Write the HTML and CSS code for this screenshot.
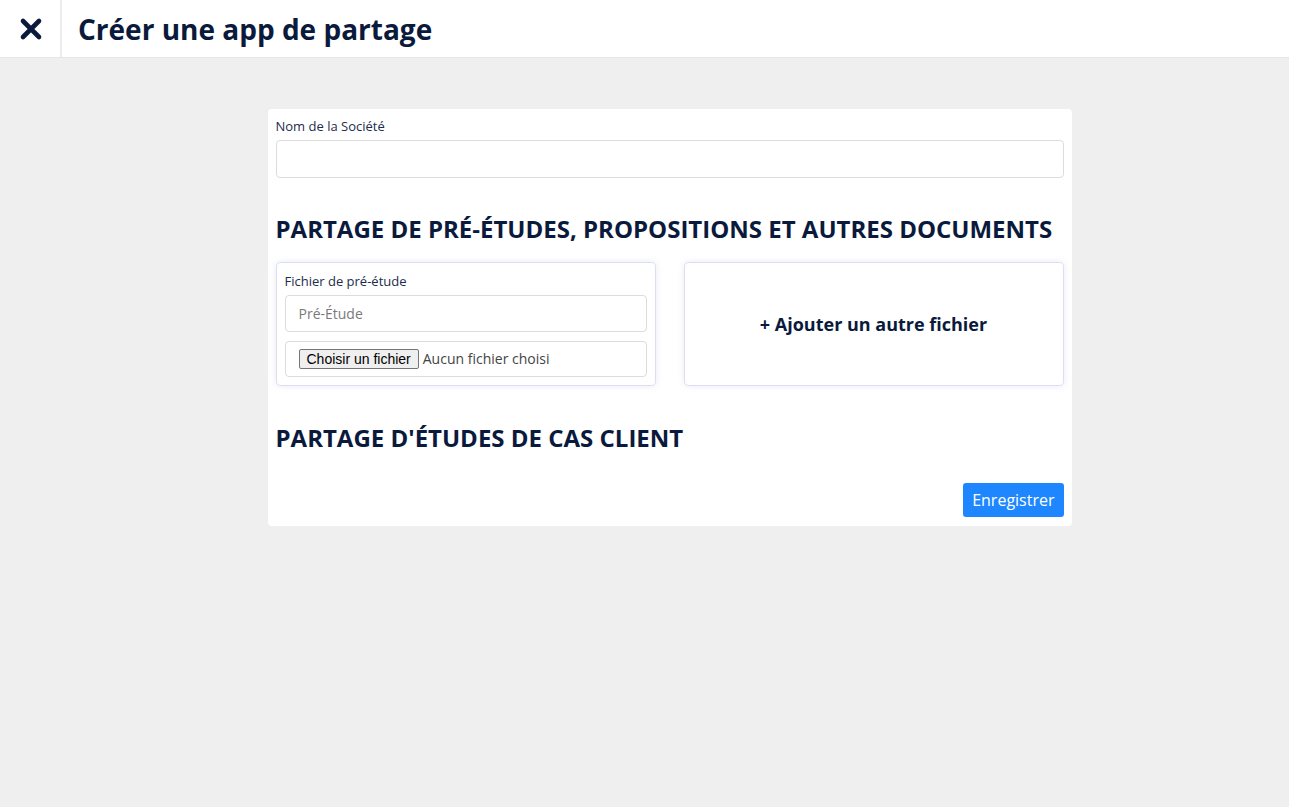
FILE: index.html
```html
<!DOCTYPE html>
<html lang="fr">
<head>
<meta charset="utf-8">
<title>Créer une app de partage</title>
<link rel="stylesheet" href="styles.css">
</head>
<body>
<header class="topbar">
  <button class="close-btn" aria-label="Fermer">
    <svg width="24" height="24" viewBox="0 0 24 24"><path d="M4 4 L20 20 M20 4 L4 20" stroke="#0a1a3c" stroke-width="4.6" stroke-linecap="round" fill="none"/></svg>
  </button>
  <h1 class="title">Créer une app de partage</h1>
</header>
<main class="page">
  <section class="card">
    <label class="label">Nom de la Société</label>
    <input class="input" type="text">
    <h2 class="section-title first">PARTAGE DE PRÉ-ÉTUDES, PROPOSITIONS ET AUTRES DOCUMENTS</h2>
    <div class="files">
      <div class="file-card">
        <label class="label">Fichier de pré-étude</label>
        <input class="input small" type="text" placeholder="Pré-Étude">
        <label class="input file-box">
          <input type="file" class="file-hidden">
          <span class="file-btn">Choisir un fichier</span>
          <span class="file-status">Aucun fichier choisi</span>
        </label>
      </div>
      <div class="file-card add">+ Ajouter un autre fichier</div>
    </div>
    <h2 class="section-title second">PARTAGE D'ÉTUDES DE CAS CLIENT</h2>
    <div class="actions"><button class="save">Enregistrer</button></div>
  </section>
</main>
</body>
</html>
```
FILE: styles.css
```css
* { box-sizing: border-box; }
html, body { margin: 0; height: 100%; }
body {
  background: #efefef;
  font-family: "Open Sans", sans-serif;
  color: #0a1a3c;
}
.topbar {
  height: 58px;
  background: #fff;
  border-bottom: 1px solid #e6e6e6;
  display: flex;
  align-items: stretch;
}
.close-btn {
  width: 62px;
  border: 0;
  border-right: 2px solid #ececec;
  background: #fff;
  display: flex;
  align-items: center;
  justify-content: center;
  padding: 0 0 0 1px;
}
.title {
  margin: 0 0 0 16px;
  font-size: 28px;
  font-weight: 700;
  align-self: center;
  line-height: 1;
}
.page {
  display: flex;
  justify-content: center;
  padding: 51px 0 0 50px;
}
.card {
  width: 804px;
  background: #fff;
  border-radius: 4px;
  padding: 8px 8px 9px;
  display: flex;
  flex-direction: column;
}
.label {
  font-size: 13px;
  color: #1d2c4c;
  line-height: 18px;
  margin-bottom: 5px;
}
.input {
  height: 38px;
  width: 100%;
  border: 1px solid #dcdcdc;
  border-radius: 4px;
  font-family: "Open Sans", sans-serif;
  font-size: 14px;
  padding: 0 13px;
  background: #fff;
}
.input::placeholder { color: #7a7a7a; }
.section-title {
  margin: 0;
  font-size: 24px;
  font-weight: 700;
  line-height: 32px;
}
.section-title.first { margin-top: 35px; margin-bottom: 17px; }
.section-title.second { margin-top: 36px; margin-bottom: 29px; }
.files {
  display: grid;
  grid-template-columns: 1fr 1fr;
  gap: 28px;
}
.file-card {
  min-width: 0;
  height: 124px;
  border: 1px solid #dcdff0;
  border-radius: 4px;
  box-shadow: 0 0 6px rgba(170, 175, 220, 0.25);
  padding: 9px 8px 8px;
  display: flex;
  flex-direction: column;
}
.input.small { height: 37px; }
.file-box {
  margin-top: 9px;
  height: 37px;
  display: flex;
  align-items: center;
  cursor: pointer;
}
.file-hidden { display: none; }
.file-btn {
  font-family: "Liberation Sans", Arial, sans-serif;
  font-size: 14px;
  line-height: 16px;
  color: #000;
  background: #efefef;
  border: 1px solid #767676;
  border-radius: 2px;
  padding: 1px 7px;
  margin-right: 4px;
}
.file-status {
  font-size: 14px;
  color: #444;
}
.add {
  align-items: center;
  justify-content: center;
  font-size: 18px;
  font-weight: 700;
  padding: 0;
}
.actions {
  display: flex;
  justify-content: flex-end;
}
.save {
  height: 34px;
  background: #1e87ff;
  color: #fff;
  border: 0;
  border-radius: 3px;
  font-family: "Open Sans", sans-serif;
  font-size: 16px;
  padding: 0 9px;
}
```
